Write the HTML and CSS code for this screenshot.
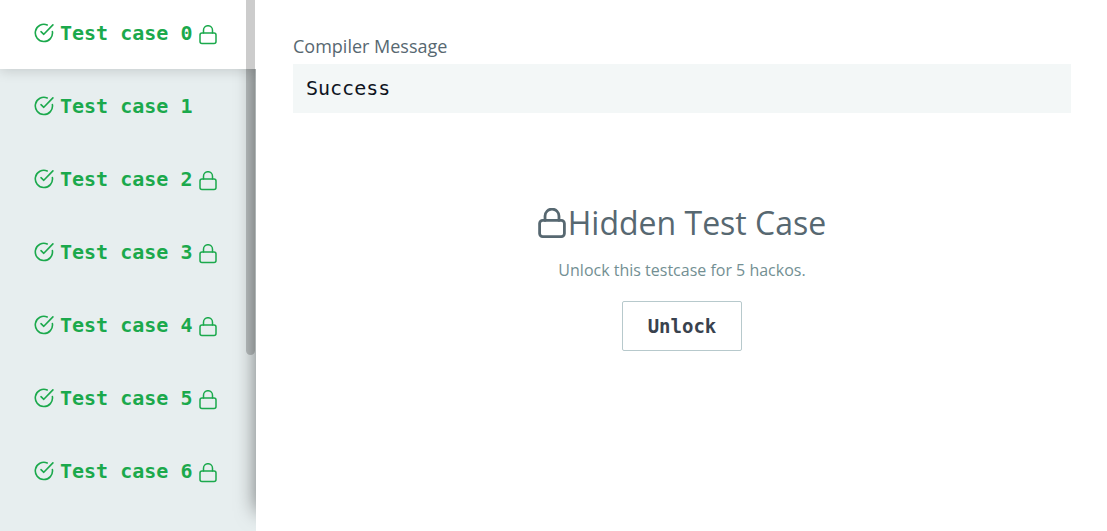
FILE: index.html
```html
<!DOCTYPE html>
<html lang="en">
<head>
    <meta charset="utf-8">
    <title>Test case results</title>
    <link rel="stylesheet" href="styles.css">
</head>
<body>
    <svg class="sprite" aria-hidden="true">
        <symbol id="check" viewBox="0 0 20 20">
            <path d="M13.2 2 A8.6 8.6 0 1 0 18.4 8.6"/>
            <path d="M7 8.7 L9.8 11.3 L18.9 1.9"/>
        </symbol>
        <symbol id="lock" viewBox="0 0 18 20">
            <rect x="1" y="8" width="16" height="10.5" rx="2"/>
            <path d="M4.5 8 V5.2 A4.5 4.5 0 0 1 13.5 5.2 V8"/>
        </symbol>
    </svg>

    <div class="results">
        <nav class="sidebar">
            <button type="button" class="case active"><svg class="icon-check"><use href="#check"/></svg>Test case 0<svg class="icon-lock"><use href="#lock"/></svg></button>
            <button type="button" class="case"><svg class="icon-check"><use href="#check"/></svg>Test case 1</button>
            <button type="button" class="case"><svg class="icon-check"><use href="#check"/></svg>Test case 2<svg class="icon-lock"><use href="#lock"/></svg></button>
            <button type="button" class="case"><svg class="icon-check"><use href="#check"/></svg>Test case 3<svg class="icon-lock"><use href="#lock"/></svg></button>
            <button type="button" class="case"><svg class="icon-check"><use href="#check"/></svg>Test case 4<svg class="icon-lock"><use href="#lock"/></svg></button>
            <button type="button" class="case"><svg class="icon-check"><use href="#check"/></svg>Test case 5<svg class="icon-lock"><use href="#lock"/></svg></button>
            <button type="button" class="case"><svg class="icon-check"><use href="#check"/></svg>Test case 6<svg class="icon-lock"><use href="#lock"/></svg></button>
            <div class="scroll-thumb"></div>
        </nav>

        <main class="details">
            <h2 class="label">Compiler Message</h2>
            <pre class="message">Success</pre>

            <section class="hidden-case">
                <h1 class="title"><svg class="icon-title"><use href="#lock"/></svg>Hidden Test Case</h1>
                <p class="hint">Unlock this testcase for 5 hackos.</p>
                <button type="button" class="unlock">Unlock</button>
            </section>
        </main>
    </div>
</body>
</html>
```
FILE: styles.css
```css
* { box-sizing: border-box; }

body {
    margin: 0;
    background: #fff;
    color: #576871;
    font-family: "Open Sans", "Noto Sans", sans-serif;
}

svg { fill: none; stroke: currentColor; stroke-linecap: round; stroke-linejoin: round; flex: none; }
.sprite { display: none; }

.results {
    display: flex;
    min-height: 100vh;
}

/* test case list */
.sidebar {
    position: relative;
    display: flex;
    flex: none;
    flex-direction: column;
    gap: 4px;
    width: 256px;
    overflow: hidden;
    background: #e7eeef;
}

/* shadow cast on the list by the details pane */
.sidebar::after {
    content: "";
    position: absolute;
    top: 0;
    bottom: 20px;
    left: 100%;
    width: 40px;
    box-shadow: 0 0 20px rgba(0, 0, 0, 0.5);
}

.case {
    display: flex;
    align-items: center;
    height: 69px;
    padding: 0 0 4px 34px;
    border: 0;
    background: none;
    color: #1ba94c;
    font: bold 20px/24px "DejaVu Sans Mono", monospace;
    white-space: nowrap;
    cursor: pointer;
}

.case.active {
    position: relative;
    z-index: 2;
    background: #fff;
    box-shadow: 0 2px 12px rgba(0, 0, 0, 0.15);
}

.icon-check { width: 20px; height: 20px; margin-right: 6px; stroke-width: 1.6; }
.icon-lock { width: 18px; height: 20px; margin: 4px 0 0 7px; stroke-width: 1.5; }

.scroll-thumb {
    position: absolute;
    z-index: 3;
    top: 0;
    right: 1px;
    width: 9px;
    height: 355px;
    border-radius: 0 0 5px 5px;
    background: rgba(0, 0, 0, 0.2);
}

/* result of the selected case */
.details {
    flex: 1;
    min-width: 0;
    padding: 34px 36px 36px 37px;
    background: #fff;
}

.label {
    margin: 0 0 6px;
    font-size: 18px;
    font-weight: normal;
    line-height: 24px;
}

.message {
    margin: 0;
    padding: 12px 13px;
    background: #f3f7f7;
    color: #0e141e;
    font: 20px/25px "DejaVu Sans Mono", monospace;
}

.hidden-case {
    display: flex;
    flex-direction: column;
    align-items: center;
    padding-top: 86px;
}

.title {
    display: flex;
    align-items: center;
    margin: 0;
    font-size: 32px;
    font-weight: normal;
    line-height: 48px;
}

.icon-title { width: 28px; height: 31px; margin-right: 2px; stroke-width: 1.8; }

.hint {
    margin: 11px 0 19px;
    color: #738f93;
    font-size: 16px;
    line-height: 24px;
}

.unlock {
    height: 50px;
    padding: 0 25px;
    border: 1px solid #b7c9cc;
    border-radius: 2px;
    background: #fff;
    color: #39424e;
    font: bold 19px/24px "DejaVu Sans Mono", monospace;
    cursor: pointer;
}
```
